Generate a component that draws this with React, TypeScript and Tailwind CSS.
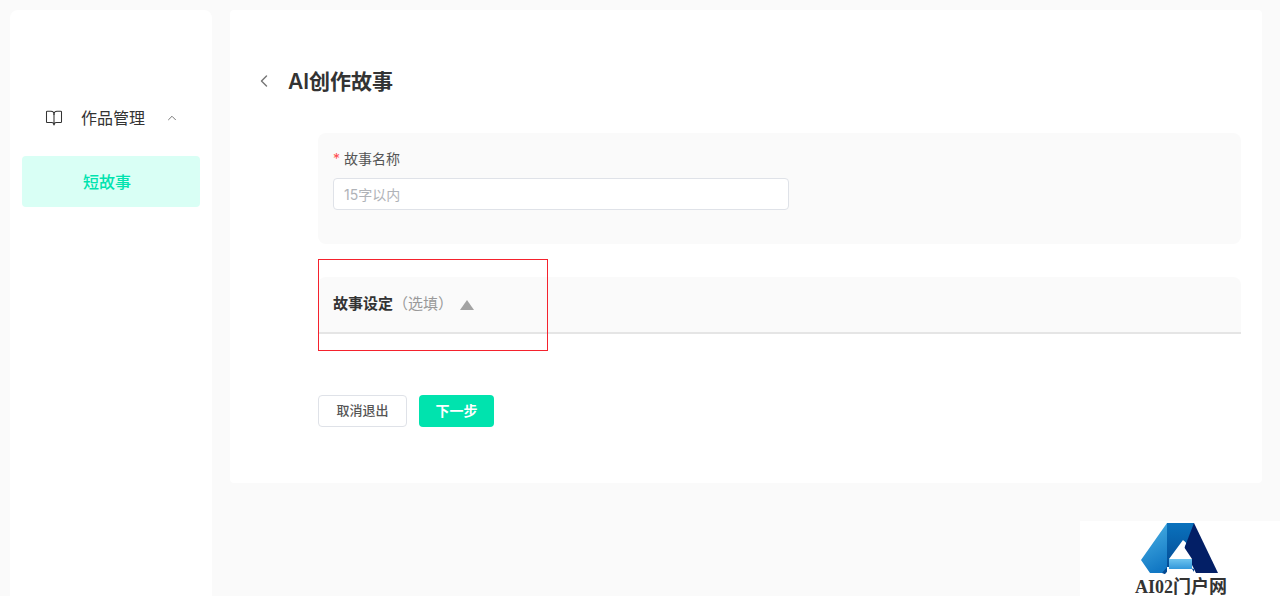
import React from 'react';
import { BookOpen, ChevronLeft, ChevronUp } from 'lucide-react';

const sans = 'font-["Inter","Noto_Sans_CJK_SC",sans-serif]';

const Watermark: React.FC = () => (
  <div className="absolute left-[1080px] top-[521px] h-[75px] w-[200px] overflow-hidden bg-white">
    <svg className="absolute left-[60px] top-[2px]" width="80" height="54" viewBox="0 0 80 54">
      <defs>
        <linearGradient id="wmLeft" x1="0" y1="0" x2="0.3" y2="1">
          <stop offset="0" stopColor="#4db4e6" />
          <stop offset="1" stopColor="#1278c4" />
        </linearGradient>
        <linearGradient id="wmMid" x1="0" y1="0" x2="0" y2="1">
          <stop offset="0" stopColor="#0a72bd" />
          <stop offset="1" stopColor="#03468f" />
        </linearGradient>
        <linearGradient id="wmBase" x1="0" y1="0" x2="0" y2="1">
          <stop offset="0" stopColor="#6ec4ef" />
          <stop offset="1" stopColor="#1a86d2" />
        </linearGradient>
      </defs>
      <polygon points="27,0 1,37 10,50 29,50 27,52 27,24 27,0" fill="url(#wmLeft)" />
      <polygon points="27,0 54,0 54,50 50,44 27,44 27,52 22,50 27,44" fill="url(#wmMid)" />
      <polygon points="54,0 78,50 56,50 44,26 54,0" fill="#031f66" />
      <polygon points="44,26 54,46 29,40 29,38 44,18 46,20" fill="#fff" />
      <rect x="29" y="36" width="23" height="14" fill="url(#wmBase)" />
      <polygon points="29,36 43,17 46,20 44,24 52,36" fill="#fff" />
      <polygon points="26,50 29,46 52,46 56,52 24,52" fill="#fff" />
    </svg>
    <div className='absolute left-[55px] top-[54px] font-["Liberation_Serif","Noto_Sans_CJK_SC",serif] text-[18px] leading-[24px] font-bold whitespace-nowrap text-[#333]'>
      AI02门户网
    </div>
  </div>
);

const App: React.FC = () => {
  return (
    <div className={`relative flex h-[596px] gap-[18px] overflow-hidden bg-[#fafafa] pt-2.5 pl-2.5 ${sans}`}>
      <aside className="h-[600px] w-[202px] shrink-0 rounded-t-lg bg-white px-3 pt-[90px]">
        <div className="flex h-9 items-center pl-[23px] text-[#333]">
          <BookOpen className="h-[18px] w-[18px]" strokeWidth={1.4} />
          <span className="ml-[18px] text-base leading-none">作品管理</span>
          <ChevronUp className="ml-5 h-3.5 w-3.5 text-[#666]" strokeWidth={1.5} />
        </div>
        <div className="mt-[20px] flex h-[51px] w-[178px] items-center rounded bg-[#d9fff5] pl-[61px] text-base font-medium text-[#00e3ae]">
          短故事
        </div>
      </aside>

      <main className="h-[473px] w-[1032px] shrink-0 rounded-sm bg-white pt-[55px]">
        <div className="flex h-8 items-center pl-[24px]">
          <ChevronLeft className="h-5 w-5 text-[#777]" strokeWidth={1.7} />
          <h1 className="ml-[14px] text-[21px] leading-none font-semibold text-[#333]">AI创作故事</h1>
        </div>

        <section className="mt-[36px] ml-[88px] h-[111px] w-[923px] rounded-lg bg-[#fafafa] px-[15px] pt-[17px]">
          <label className="flex h-[18px] items-center text-sm text-[#555]">
            <span className="mr-1 text-[#ff4d4f]">*</span>
            故事名称
          </label>
          <input
            readOnly
            placeholder="15字以内"
            className="mt-[10px] block h-8 w-[456px] rounded border border-[#dfe2e8] bg-white px-2.5 text-sm outline-none placeholder:text-[#b0b3b8]"
          />
        </section>

        <section className="mt-[33px] ml-[88px] flex h-[57px] w-[923px] items-center rounded-t-lg border-b-2 border-[#e5e5e5] bg-[#fafafa] px-[15px]">
          <span className="text-[15px] font-semibold text-[#333]">故事设定</span>
          <span className="text-[15px] text-[#999]">（选填）</span>
          <span className="ml-[7px] h-0 w-0 border-x-[7.5px] border-b-[10px] border-x-transparent border-b-[#a3a3a3]" />
        </section>

        <div className="mt-[61px] ml-[88px] flex gap-3">
          <button className="h-8 w-[89px] rounded border border-[#dfe2e8] bg-white text-[13px] font-medium text-[#555]">
            取消退出
          </button>
          <button className="h-8 w-[75px] rounded bg-[#00e3ae] text-sm font-semibold text-white">下一步</button>
        </div>
      </main>

      <div className="absolute top-[259px] left-[318px] h-[92px] w-[230px] border border-[#f5222d]" />
      <Watermark />
    </div>
  );
};

export default App;
